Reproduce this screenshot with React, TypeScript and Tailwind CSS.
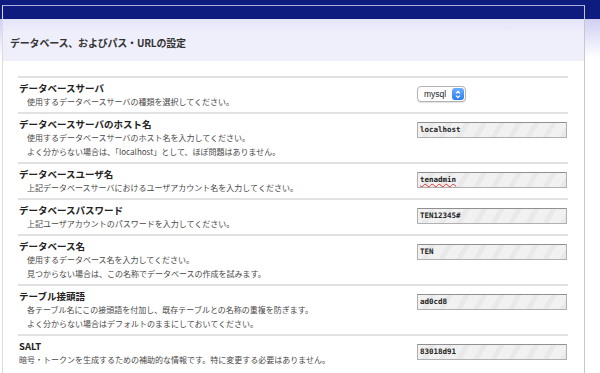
const rows = [
  {
    title: "データベースサーバ",
    desc: ["使用するデータベースサーバの種類を選択してください。"],
    kind: "select",
    value: "mysql",
  },
  {
    title: "データベースサーバのホスト名",
    desc: [
      "使用するデータベースサーバのホスト名を入力してください。",
      "よく分からない場合は、「localhost」として、ほぼ問題はありません。",
    ],
    value: "localhost",
  },
  {
    title: "データベースユーザ名",
    desc: ["上記データベースサーバにおけるユーザアカウント名を入力してください。"],
    value: "tenadmin",
    spell: true,
  },
  {
    title: "データベースパスワード",
    desc: ["上記ユーザアカウントのパスワードを入力してください。"],
    value: "TEN12345#",
  },
  {
    title: "データベース名",
    desc: [
      "使用するデータベース名を入力してください。",
      "見つからない場合は、この名称でデータベースの作成を試みます。",
    ],
    value: "TEN",
  },
  {
    title: "テーブル接頭語",
    desc: [
      "各テーブル名にこの接頭語を付加し、既存テーブルとの名称の重複を防ぎます。",
      "よく分からない場合はデフォルトのままにしておいてください。",
    ],
    value: "ad0cd8",
  },
  {
    title: "SALT",
    desc: ["暗号・トークンを生成するための補助的な情報です。特に変更する必要はありません。"],
    value: "83018d91",
    flush: true,
  },
];

const jp = "font-['Noto_Sans_CJK_JP','Noto_Sans',sans-serif]";

const SelectBox = ({ value }: { value: string }) => (
  <div className="flex items-center w-[49px] h-[16px] bg-white border border-[#b4b4b4] rounded-[4px] shadow-[0_1px_1px_rgba(0,0,0,0.12)] pl-[6px] pr-[1px] justify-between">
    <span className="text-[8.5px] text-[#222] font-['Liberation_Sans',sans-serif] leading-none">
      {value}
    </span>
    <span className="w-[12px] h-[12px] rounded-[3px] bg-[linear-gradient(#6cb0ff,#2a7cf0)] flex items-center justify-center">
      <svg width="6" height="9" viewBox="0 0 6 9" fill="none" stroke="white" strokeWidth="1.2">
        <path d="M1 3.3 L3 1.3 L5 3.3" />
        <path d="M1 5.7 L3 7.7 L5 5.7" />
      </svg>
    </span>
  </div>
);

const TextBox = ({ value, spell }: { value: string; spell?: boolean }) => (
  <div className="w-[150px] h-[16px] border border-[#b0b0b0] border-t-[#909090] bg-[repeating-linear-gradient(120deg,#f1f1f1_0px,#f1f1f1_10px,#e9e9e9_10px,#e9e9e9_15px)] flex items-center pl-[2px]">
    <span
      className={
        "text-[7.5px] text-[#222] font-['DejaVu_Sans_Mono',monospace] font-bold leading-none " +
        (spell ? "underline decoration-wavy decoration-[#e03030] decoration-[0.8px] underline-offset-[1px]" : "")
      }
    >
      {value}
    </span>
  </div>
);

export default function App() {
  return (
    <div className="w-[600px] h-[373px] overflow-hidden bg-[linear-gradient(to_bottom,#0d1c7e_0px,#0d1c7e_19px,#cfd0f3_19px,#e2e2f8_35px,#ffffff_58px)]">
      <div className={"ml-[2px] mt-[5px] w-[583px] h-[400px] border border-[#a9acdc] border-b-0 border-r-[#c8c8cc] border-l-[#dcdce0] " + jp}>
        <div className="h-[13px]" />
        <div className="h-[42px] bg-[linear-gradient(to_bottom,#e4e4f8_0px,#ececfa_12px,#efeffb_12px,#efeffb_42px)] pl-[7px] pt-[19px]">
          <h1 className="text-[10px] font-bold text-[#333] leading-none tracking-[-0.2px]">
            データベース、およびパス・URLの設定
          </h1>
        </div>
        <div className="bg-white pl-[15px] pr-[16px] pt-[15px]">
          {rows.map((r) => (
            <div key={r.title} className="border-t-2 border-[#e2e2e2] flex justify-between pt-[3px] pb-[3px]">
              <div>
                <div className="text-[9.5px] font-bold text-[#222] leading-[14px] pl-[1px]">{r.title}</div>
                {r.desc.map((d) => (
                  <div
                    key={d}
                    className={"text-[8px] text-[#484848] leading-[14px] " + (r.flush ? "pl-[1px]" : "pl-[9px]")}
                  >
                    {d}
                  </div>
                ))}
              </div>
              <div className="w-[151px] pt-[5px]">
                {r.kind === "select" ? <SelectBox value={r.value} /> : <TextBox value={r.value} spell={r.spell} />}
              </div>
            </div>
          ))}
        </div>
      </div>
    </div>
  );
}
